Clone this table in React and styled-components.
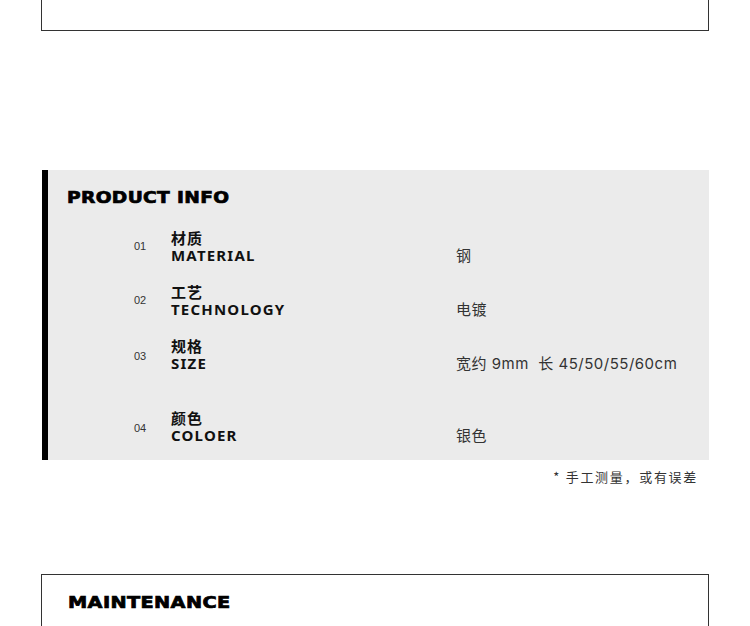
import React from "react";
import styled, { createGlobalStyle } from "styled-components";

const Global = createGlobalStyle`
  html, body { margin: 0; padding: 0; background: #fff; }
  body { font-family: "Noto Sans", "Noto Sans CJK SC", sans-serif; color: #111; }
`;

const Page = styled.div`
  width: 750px;
  height: 626px;
  overflow: hidden;
  display: flex;
  flex-direction: column;
`;

const TopBox = styled.div`
  margin: 0 41px;
  height: 30px;
  border: 1px solid #333;
  border-top: none;
  flex-shrink: 0;
`;

const Panel = styled.section`
  margin: 139px 41px 0 42px;
  height: 290px;
  background: #ebebeb;
  border-left: 6px solid #000;
  box-sizing: border-box;
  padding: 18px 0 0 19px;
  flex-shrink: 0;
`;

const Heading = styled.h2`
  margin: 0;
  font-family: "DejaVu Sans", sans-serif;
  font-weight: 900;
  font-size: 15.5px;
  line-height: 20px;
  letter-spacing: 0.3px;
  color: #000;
  -webkit-text-stroke: 0.7px #000;
  transform: scaleX(${(p) => p.$sx || 1.2});
  transform-origin: left center;
`;

const Rows = styled.div`
  margin-top: 20px;
  display: flex;
  flex-direction: column;
`;

const Row = styled.div`
  display: grid;
  grid-template-columns: 37px 287px 1fr;
  padding-left: 67px;
  align-items: center;
  height: 36px;
  margin-bottom: ${(p) => p.$gap}px;
`;

const Num = styled.span`
  font-family: "Liberation Sans", sans-serif;
  font-size: 11px;
  color: #333;
  padding-top: ${(p) => p.$shift || 0}px;
`;

const Label = styled.div`
  display: flex;
  flex-direction: column;
`;

const Cn = styled.span`
  font-family: "Noto Sans CJK SC", sans-serif;
  font-weight: 700;
  font-size: 15px;
  line-height: 19px;
  color: #111;
  letter-spacing: 1px;
`;

const En = styled.span`
  font-family: "Noto Sans", sans-serif;
  font-weight: 700;
  font-size: 15px;
  line-height: 17px;
  letter-spacing: 1.2px;
  color: #111;
`;

const Value = styled.span`
  align-self: end;
  margin-left: -2px;
  font-family: "Inter", "Noto Sans CJK SC", sans-serif;
  font-size: 15px;
  line-height: 17px;
  letter-spacing: 0.5px;
  color: #333;
  white-space: pre;
`;

const Note = styled.p`
  margin: 8px 52px 0 0;
  text-align: right;
  font-family: "Noto Sans CJK SC", sans-serif;
  font-size: 13px;
  line-height: 18px;
  letter-spacing: 1.7px;
  color: #333;
`;

const BottomBox = styled.section`
  margin: 88px 41px 0;
  border: 1px solid #333;
  border-bottom: none;
  padding: 18px 0 0 26px;
  flex: 1;
`;

const rows = [
  { n: "01", cn: "材质", en: "MATERIAL", v: "钢", gap: 18, s: 0 },
  { n: "02", cn: "工艺", en: "TECHNOLOGY", v: "电镀", gap: 18, s: 0 },
  { n: "03", cn: "规格", en: "SIZE", v: "宽约 9mm  长 45/50/55/60cm", gap: 36, s: 4 },
  { n: "04", cn: "颜色", en: "COLOER", v: "银色", gap: 0, s: 4 },
];

export default function App() {
  return (
    <Page>
      <Global />
      <TopBox />
      <Panel>
        <Heading $sx={1.2}>PRODUCT INFO</Heading>
        <Rows>
          {rows.map((r) => (
            <Row key={r.n} $gap={r.gap}>
              <Num $shift={r.s}>{r.n}</Num>
              <Label>
                <Cn>{r.cn}</Cn>
                <En>{r.en}</En>
              </Label>
              <Value>{r.v}</Value>
            </Row>
          ))}
        </Rows>
      </Panel>
      <Note>* 手工测量，或有误差</Note>
      <BottomBox>
        <Heading $sx={1.245}>MAINTENANCE</Heading>
      </BottomBox>
    </Page>
  );
}
